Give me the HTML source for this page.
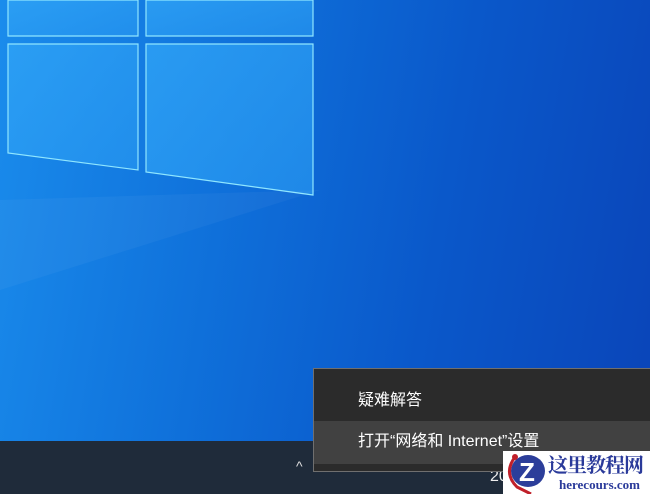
<!DOCTYPE html>
<html><head><meta charset="utf-8"><style>
body{margin:0;width:650px;height:494px;overflow:hidden;position:relative;font-family:"Liberation Sans","Noto Sans CJK SC",sans-serif;
background:linear-gradient(100deg,#1a8cec 0%,#0f70da 35%,#0a58ca 65%,#0a44b8 100%);}
.tb{position:absolute;left:0;top:441px;width:650px;height:53px;background:#1f2b3a;}
.menu{position:absolute;left:313px;top:368px;width:337px;height:104px;background:#2b2b2b;border:1px solid #6f6f6f;border-right:none;box-sizing:border-box;}
.it{position:absolute;left:0;width:100%;color:#fff;font-size:16px;padding-left:44px;box-sizing:border-box;}
.wm{position:absolute;left:503px;top:451px;width:147px;height:43px;background:#fff;}
</style></head><body>
<svg width="650" height="300" style="position:absolute;left:0;top:0">
<defs><linearGradient id="g" x1="0" y1="0" x2="1" y2="1"><stop offset="0" stop-color="#2fa3f6" stop-opacity=".8"/><stop offset="1" stop-color="#2696f0" stop-opacity=".7"/></linearGradient></defs>
<polygon points="8,0 138,0 138,36 8,36" fill="url(#g)" stroke="#8fe6ff" stroke-width="1.2"/>
<polygon points="146,0 313,0 313,36 146,36" fill="url(#g)" stroke="#8fe6ff" stroke-width="1.2"/>
<polygon points="8,44 138,44 138,170 8,153" fill="url(#g)" stroke="#8fe6ff" stroke-width="1.2"/>
<polygon points="146,44 313,44 313,195 146,172" fill="url(#g)" stroke="#8fe6ff" stroke-width="1.2"/>
<polygon points="0,290 0,200 320,190" fill="#ffffff" opacity=".04"/>
</svg>
<div class="tb"></div>
<div style="position:absolute;left:296px;top:458px;color:#ddd;font-size:14px">^</div>
<div style="position:absolute;left:490px;top:468px;color:#eee;font-size:16px">20</div>
<div class="menu">
<div class="it" style="top:0;height:52px;line-height:64px">疑难解答</div>
<div class="it" style="top:52px;height:43px;line-height:42px;background:#414141">打开“网络和 Internet”设置</div>
</div>
<div class="wm">
<svg width="50" height="43" style="position:absolute;left:0;top:0"><ellipse cx="25" cy="20" rx="17" ry="16" fill="#2c3e9a"/><text x="16" y="30" font-size="26" font-weight="bold" fill="#fff" font-family="Liberation Sans">Z</text><path d="M12 6 Q0 22 14 36 L28 43" stroke="#c0202a" stroke-width="3" fill="none"/><circle cx="12" cy="6" r="3" fill="#c0202a"/></svg>
<div style="position:absolute;left:45px;top:1px;font-size:20px;line-height:24px;font-weight:bold;color:#2a3a9a;font-family:'Noto Serif CJK SC',serif;letter-spacing:-1px">这里教程网</div>
<div style="position:absolute;left:56px;top:26px;font-size:13px;line-height:15px;font-weight:bold;color:#2a3a9a;font-family:'Liberation Serif',serif">herecours.com</div>
</div>
</body></html>
